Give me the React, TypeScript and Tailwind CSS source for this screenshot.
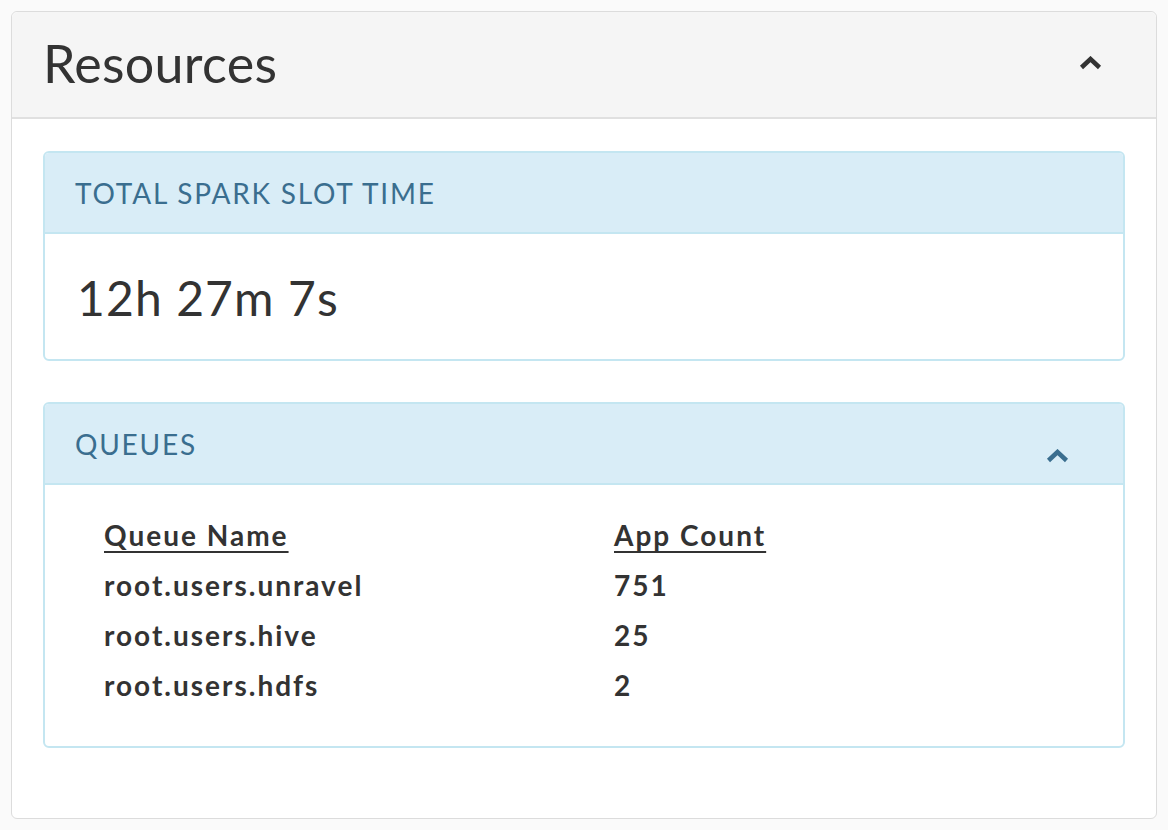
const queues = [
  { name: 'root.users.unravel', count: 751 },
  { name: 'root.users.hive', count: 25 },
  { name: 'root.users.hdfs', count: 2 },
];

function Chevron({ className = '' }: { className?: string }) {
  return (
    <svg width="23" height="15" viewBox="0 0 23 15" className={className}>
      <path d="M2.5 11.5 L11.5 3 L20.5 11.5" fill="none" stroke="currentColor" strokeWidth="4.5" strokeLinejoin="miter" />
    </svg>
  );
}

export default function App() {
  return (
    <div className="min-h-[830px] bg-[#fafafa] p-[11px] font-['Lato','Noto_Sans',sans-serif] text-[#333]">
      <div className="rounded-[6px] border border-[#dcdcdc] bg-white">
        {/* Header */}
        <div className="flex h-[107px] items-center justify-between rounded-t-[6px] border-b-2 border-[#e0e0e0] bg-[#f5f5f5] pl-[31px] pr-[54px]">
          <h1 className="mt-[-3px] text-[52px] leading-none tracking-[0.3px] text-[#333]">Resources</h1>
          <Chevron className="mt-[-3px] text-[#333]" />
        </div>

        <div className="flex flex-col gap-[41px] px-[31px] pb-[70px] pt-[32px]">
          {/* Total spark slot time */}
          <div className="rounded-[6px] border-2 border-[#c4e6f1] bg-white">
            <div className="flex h-[81px] items-center rounded-t-[4px] border-b-2 border-[#c4e6f1] bg-[#d9edf7] pl-[30px]">
              <span className="text-[28px] leading-none tracking-[1.8px] text-[#3a6e8f]">TOTAL SPARK SLOT TIME</span>
            </div>
            <div className="flex h-[125px] items-center pl-[32px]">
              <span className="mt-[2px] text-[48px] leading-none tracking-[1.1px] text-[#333]">12h 27m 7s</span>
            </div>
          </div>

          {/* Queues */}
          <div className="rounded-[6px] border-2 border-[#c4e6f1] bg-white">
            <div className="flex h-[81px] items-center justify-between rounded-t-[4px] border-b-2 border-[#c4e6f1] bg-[#d9edf7] pl-[30px] pr-[54px]">
              <span className="text-[28px] leading-none tracking-[1.8px] text-[#3a6e8f]">QUEUES</span>
              <Chevron className="mt-[26px] text-[#3a6e8f]" />
            </div>
            <div className="pb-[29px] pl-[59px] pt-[32px]">
              <table className="border-collapse text-left text-[28px] font-bold leading-[36px] tracking-[2px] text-[#333]">
                <thead>
                  <tr className="h-[50px] align-top">
                    <th className="w-[510px] font-bold">
                      <span className="underline decoration-2 underline-offset-[5px]">Queue Name</span>
                    </th>
                    <th className="font-bold">
                      <span className="underline decoration-2 underline-offset-[5px]">App Count</span>
                    </th>
                  </tr>
                </thead>
                <tbody>
                  {queues.map((q) => (
                    <tr key={q.name} className="h-[50px] align-top">
                      <td>{q.name}</td>
                      <td>{q.count}</td>
                    </tr>
                  ))}
                </tbody>
              </table>
            </div>
          </div>
        </div>
      </div>
    </div>
  );
}
